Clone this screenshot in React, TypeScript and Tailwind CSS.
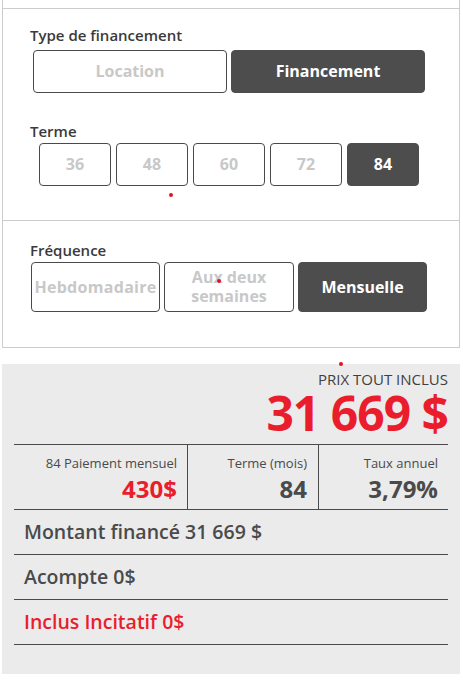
import { ReactNode } from 'react';

type OptionProps = {
  label: ReactNode;
  active?: boolean;
  className?: string;
};

function Option({ label, active, className = '' }: OptionProps) {
  return (
    <div
      className={`flex items-center justify-center rounded-[4px] border text-center text-[16px] font-bold leading-[19px] ${
        active ? 'border-[#4d4d4d] bg-[#4d4d4d] text-white' : 'border-[#4a4a4a] bg-white text-[#c8c8c8]'
      } ${className}`}
    >
      {label}
    </div>
  );
}

function Dot({ className }: { className: string }) {
  return <span className={`absolute h-[4px] w-[4px] rounded-full bg-[#e8101e] ${className}`} />;
}

export default function App() {
  const terms = ['36', '48', '60', '72', '84'];

  return (
    <div className="relative min-h-[692px] bg-white font-['Open_Sans',sans-serif] text-[#4a4a4a]">
      {/* options */}
      <div className="ml-[2px] w-[458px] border-x border-b border-[#cccccc]">
        <div className="h-[9px] border-b border-[#cccccc]" />

        <div className="h-[212px] border-b border-[#cccccc] pt-[16px]">
          <div className="pl-[27px] text-[15px] font-semibold leading-[20px] text-[#3a3a3a]">Type de financement</div>
          <div className="mt-[5px] ml-[30px] flex gap-[4px]">
            <Option label="Location" className="h-[43px] w-[194px]" />
            <Option label="Financement" active className="h-[43px] w-[194px]" />
          </div>

          <div className="mt-[28px] pl-[27px] text-[15px] font-semibold leading-[20px] text-[#3a3a3a]">Terme</div>
          <div className="mt-[2px] ml-[36px] flex gap-[5px]">
            {terms.map((t) => (
              <Option key={t} label={t} active={t === '84'} className="h-[43px] w-[72px]" />
            ))}
          </div>
        </div>

        <div className="h-[126px] pt-[19px]">
          <div className="pl-[27px] text-[15px] font-semibold leading-[20px] text-[#3a3a3a]">Fréquence</div>
          <div className="mt-[2px] ml-[28px] flex gap-[4px]">
            <Option label="Hebdomadaire" className="h-[50px] w-[129px] tracking-[0.3px]" />
            <Option
              label={
                <span>
                  Aux deux
                  <br />
                  semaines
                </span>
              }
              className="h-[50px] w-[130px]"
            />
            <Option label="Mensuelle" active className="h-[50px] w-[129px]" />
          </div>
        </div>
      </div>

      {/* summary */}
      <div className="mt-[16px] ml-[2px] h-[310px] w-[458px] bg-[#ebebeb] pt-[5px]">
        <div className="pr-[12px] text-right text-[15px] font-medium leading-[20px] text-[#3f3f3f]">PRIX TOUT INCLUS</div>
        <div className="pr-[12px] text-right text-[48px] font-bold leading-[48px] tracking-[-1px] text-[#ea1d2c]">
          31 669 $
        </div>

        <div className="mx-[12px] mt-[7px] grid grid-cols-[173px_131px_1fr] border-y border-[#4a4a4a]">
          <div className="h-[64px] pr-[10px] pt-[9px] text-right">
            <div className="text-[13px] font-medium leading-[18px]">84 Paiement mensuel</div>
            <div className="mt-[2px] text-[24px] font-bold leading-[29px] text-[#ea1d2c]">430$</div>
          </div>
          <div className="h-[64px] border-l border-[#4a4a4a] pr-[11px] pt-[9px] text-right">
            <div className="text-[13px] font-medium leading-[18px]">Terme (mois)</div>
            <div className="mt-[2px] text-[24px] font-bold leading-[29px]">84</div>
          </div>
          <div className="h-[64px] border-l border-[#4a4a4a] pr-[10px] pt-[9px] text-right">
            <div className="text-[13px] font-medium leading-[18px]">Taux annuel</div>
            <div className="mt-[2px] text-[24px] font-bold leading-[29px]">3,79%</div>
          </div>
        </div>

        <div className="mx-[12px]">
          <div className="flex h-[45px] items-center border-b border-[#4a4a4a] pl-[10px] text-[19.5px] font-semibold">
            Montant financé 31 669 $
          </div>
          <div className="flex h-[45px] items-center border-b border-[#4a4a4a] pl-[10px] text-[19.5px] font-semibold">
            Acompte 0$
          </div>
          <div className="flex h-[45px] items-center border-b border-[#4a4a4a] pl-[10px] text-[19.5px] font-semibold text-[#ea1d2c]">
            Inclus Incitatif 0$
          </div>
        </div>
      </div>

      <Dot className="left-[169px] top-[193px]" />
      <Dot className="left-[217px] top-[279px]" />
      <Dot className="left-[339px] top-[362px]" />
    </div>
  );
}
